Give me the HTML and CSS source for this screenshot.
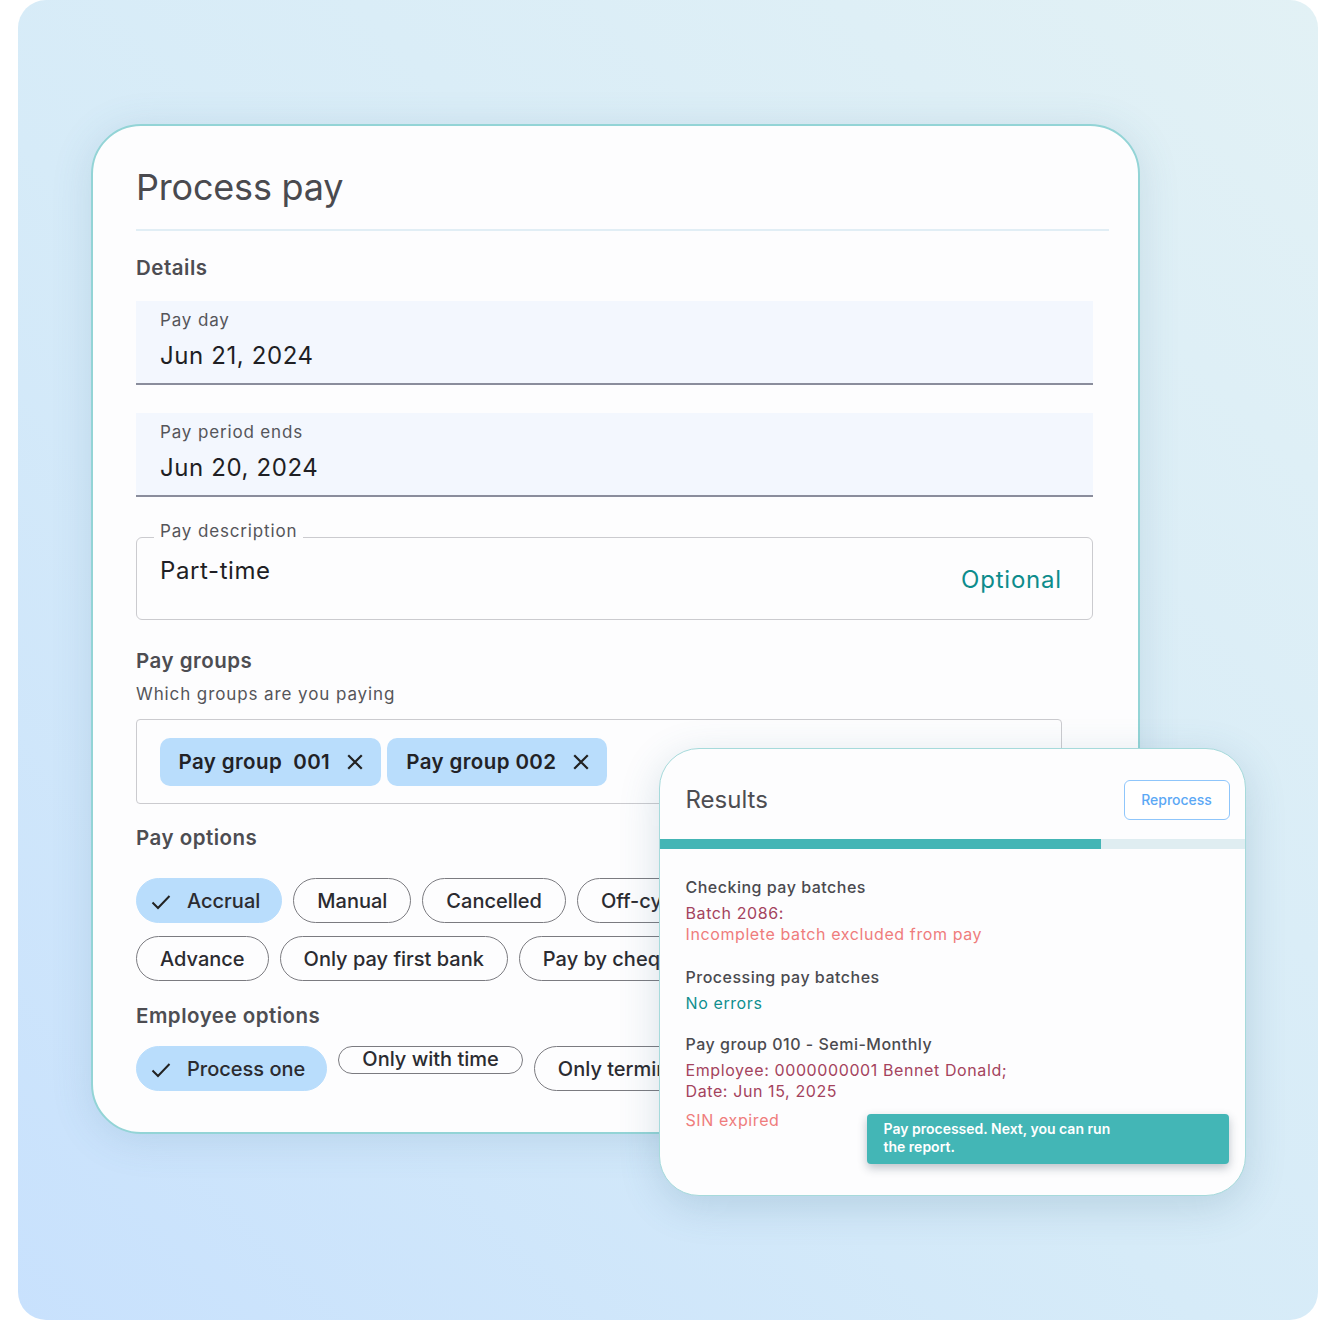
FILE: index.html
```html
<!DOCTYPE html>
<html lang="en">
<head>
<meta charset="utf-8">
<title>Process pay</title>
<link rel="stylesheet" href="styles.css">
</head>
<body>
<div class="stage">
  <div class="card main">
    <h1 class="title">Process pay</h1>
    <div class="divider"></div>
    <h2 class="section details-h">Details</h2>

    <div class="filled">
      <div class="flabel">Pay day</div>
      <div class="fvalue">Jun 21, 2024</div>
    </div>
    <div class="filled second">
      <div class="flabel">Pay period ends</div>
      <div class="fvalue">Jun 20, 2024</div>
    </div>

    <div class="outlined">
      <span class="olabel">Pay description</span>
      <div class="fvalue otext">Part-time</div>
      <div class="optional">Optional</div>
    </div>

    <h2 class="section groups-h">Pay groups</h2>
    <p class="hint">Which groups are you paying</p>
    <div class="groupbox">
      <span class="tag"><span>Pay group&nbsp; 001</span><svg class="x" viewBox="0 0 16 16" width="16" height="16"><path d="M2 2 L14 14 M14 2 L2 14" stroke="#222" stroke-width="2.2" stroke-linecap="square" fill="none"/></svg></span>
      <span class="tag"><span>Pay group 002</span><svg class="x" viewBox="0 0 16 16" width="16" height="16"><path d="M2 2 L14 14 M14 2 L2 14" stroke="#222" stroke-width="2.2" stroke-linecap="square" fill="none"/></svg></span>
    </div>

    <h2 class="section options-h">Pay options</h2>
    <div class="chips row1">
      <span class="chip sel"><svg class="chk" viewBox="0 0 20 16" width="20" height="16"><path d="M1.5 8.5 L7 14 L18.5 2" stroke="#222" stroke-width="2" fill="none"/></svg>Accrual</span>
      <span class="chip">Manual</span>
      <span class="chip">Cancelled</span>
      <span class="chip">Off-cycle</span>
    </div>
    <div class="chips row2">
      <span class="chip">Advance</span>
      <span class="chip">Only pay first bank</span>
      <span class="chip">Pay by cheque</span>
    </div>

    <h2 class="section emp-h">Employee options</h2>
    <div class="chips row3">
      <span class="chip sel"><svg class="chk" viewBox="0 0 20 16" width="20" height="16"><path d="M1.5 8.5 L7 14 L18.5 2" stroke="#222" stroke-width="2" fill="none"/></svg>Process one</span>
      <span class="chip short">Only with time</span>
      <span class="chip">Only terminated</span>
    </div>
  </div>

  <div class="card results">
    <div class="rhead">
      <h3 class="rtitle">Results</h3>
      <button class="reprocess">Reprocess</button>
    </div>
    <div class="progress"><div class="pfill" style="width:441px"></div></div>
    <div class="rbody">
      <div class="rh">Checking pay batches</div>
      <div class="rl err-dark g5">Batch 2086:</div>
      <div class="rl err-light">Incomplete batch excluded from pay</div>
      <div class="rh g22">Processing pay batches</div>
      <div class="rl ok g5">No errors</div>
      <div class="rh g20">Pay group 010 - Semi-Monthly</div>
      <div class="rl err-dark g5">Employee: 0000000001 Bennet Donald;</div>
      <div class="rl err-dark">Date: Jun 15, 2025</div>
      <div class="rl err-light g8">SIN expired</div>
    </div>
    <div class="toast">Pay processed. Next, you can run<br>the report.</div>
  </div>
</div>
</body>
</html>
```
FILE: styles.css
```css
* { box-sizing: border-box; }
html, body { margin: 0; padding: 0; background: #ffffff; }
body { font-family: Inter, "Noto Sans", Roboto, sans-serif; color: #222; }

.stage {
  position: relative;
  margin-left: 18px;
  width: 1300px;
  height: 1320px;
  border-radius: 28px;
  background: linear-gradient(45deg, #c8e1fd 0%, #d6ebf8 45%, #e2f1f5 100%);
  padding: 124px 0 0 73px;
  overflow: hidden;
}

.card {
  background: #fdfdfe;
  border: 2px solid #93d4d6;
}

.main {
  width: 1049px;
  height: 1010px;
  border-radius: 50px;
  padding: 37px 29px 0 43px;
  box-shadow: 0 6px 40px rgba(70, 120, 150, 0.16);
  overflow: hidden;
}

.title {
  margin: 0;
  font-size: 36px;
  line-height: 48px;
  font-weight: 400;
  color: #4a4a4f;
  letter-spacing: -0.2px;
}

.divider {
  margin-top: 18px;
  height: 2px;
  background: #e1eef5;
}

.section {
  margin: 0;
  font-size: 20.5px;
  line-height: 24px;
  font-weight: 600;
  color: #4d4d52;
  letter-spacing: 0.5px;
}
.details-h { margin-top: 25px; }
.groups-h { margin-top: 29px; }
.options-h { margin-top: 22px; }
.emp-h { margin-top: 23px; }

.filled {
  margin-top: 21px;
  width: 957px;
  height: 84px;
  background: #f3f7fe;
  border-bottom: 2px solid #8a8d9c;
  padding: 9px 0 0 24px;
}
.filled.second { margin-top: 28px; }

.flabel {
  font-size: 17px;
  line-height: 20px;
  color: #55555a;
  letter-spacing: 0.85px;
}
.fvalue {
  margin-top: 11px;
  font-size: 24px;
  line-height: 30px;
  color: #1f1f24;
  letter-spacing: 0.6px;
}

.outlined {
  position: relative;
  margin-top: 40px;
  width: 957px;
  height: 83px;
  border: 1.5px solid #cbcbcf;
  border-radius: 6px;
  padding: 18px 30px 0 23px;
  display: flex;
  justify-content: space-between;
}
.olabel {
  position: absolute;
  left: 17px;
  top: -17px;
  padding: 0 6px;
  background: #fdfdfe;
  font-size: 17px;
  line-height: 20px;
  color: #55555a;
  letter-spacing: 0.85px;
}
.otext { margin-top: 0; }
.optional {
  margin-top: 9px;
  font-size: 24px;
  line-height: 30px;
  color: #0d8c8c;
  letter-spacing: 0.8px;
}

.hint {
  margin: 10px 0 0;
  font-size: 17px;
  line-height: 22px;
  color: #55555a;
  letter-spacing: 0.9px;
}

.groupbox {
  margin-top: 14px;
  width: 926px;
  height: 85px;
  border: 1.5px solid #cbcbcf;
  border-radius: 4px;
  padding: 17.5px 0 0 22.5px;
  display: flex;
  align-items: flex-start;
  gap: 6px;
}
.tag {
  height: 48px;
  padding: 0 18px 0 19px;
  border-radius: 10px;
  background: #b9ddfc;
  display: inline-flex;
  align-items: center;
  gap: 17px;
  font-size: 20.5px;
  font-weight: 600;
  color: #222226;
  letter-spacing: 0.4px;
  white-space: nowrap;
}
.x { display: block; flex: none; }

.chips {
  width: 523px;
  overflow: hidden;
  display: flex;
  flex-wrap: nowrap;
  align-items: flex-start;
  gap: 11px;
}
.row1 { margin-top: 28px; }
.row2 { margin-top: 13px; }
.row3 { margin-top: 18px; }

.chip {
  flex: none;
  height: 45px;
  padding: 0 23px;
  border: 1.5px solid #7b7b80;
  border-radius: 23px;
  display: inline-flex;
  align-items: center;
  font-size: 20px;
  font-weight: 500;
  color: #2b2b30;
  white-space: nowrap;
}
.chip.sel {
  background: #b9ddfc;
  border-color: #b9ddfc;
  padding: 0 21px 0 14px;
  gap: 16px;
}
.chip.short {
  height: 28px;
  border-radius: 14px;
  padding-bottom: 2px;
}
.chk { display: block; flex: none; margin-top: 2px; }

/* Results card */
.results {
  position: absolute;
  left: 641px;
  top: 748px;
  width: 587px;
  height: 448px;
  border-radius: 40px;
  border: 1.5px solid #a6dadb;
  box-shadow: 0 10px 40px rgba(60, 110, 140, 0.2);
  overflow: hidden;
}
.rhead {
  height: 89.5px;
  padding: 30.5px 15.5px 0 25.5px;
  display: flex;
  justify-content: space-between;
  align-items: flex-start;
}
.rtitle {
  margin: 5px 0 0;
  font-size: 24px;
  line-height: 30px;
  font-weight: 400;
  color: #4d4d52;
}
.reprocess {
  width: 106px;
  height: 40px;
  border: 1.5px solid #8fc6fb;
  border-radius: 6px;
  background: #ffffff;
  font-family: inherit;
  font-size: 14px;
  font-weight: 500;
  color: #5ba8f5;
  padding: 0;
}
.progress {
  height: 10px;
  background: #dfedf1;
}
.pfill {
  height: 10px;
  background: #43b5b5;
}
.rbody {
  padding: 28px 0 0 25.5px;
}
.rh {
  font-size: 16px;
  line-height: 21px;
  font-weight: 500;
  color: #4a4a4f;
  letter-spacing: 0.5px;
}
.rl {
  font-size: 16px;
  line-height: 21px;
  letter-spacing: 0.6px;
}
.g5 { margin-top: 5px; }
.g8 { margin-top: 8px; }
.g20 { margin-top: 20px; }
.g22 { margin-top: 22px; }
.err-dark { color: #a4435d; }
.err-light { color: #ef7c7c; }
.ok { color: #0f8f8f; }

.toast {
  position: absolute;
  left: 206.5px;
  top: 364.5px;
  width: 362px;
  height: 50px;
  background: #43b6b6;
  border-radius: 4px;
  box-shadow: 0 4px 10px rgba(40, 60, 80, 0.3);
  padding: 6px 0 0 17px;
  font-size: 14px;
  line-height: 18px;
  font-weight: 600;
  color: #ffffff;
}
```
